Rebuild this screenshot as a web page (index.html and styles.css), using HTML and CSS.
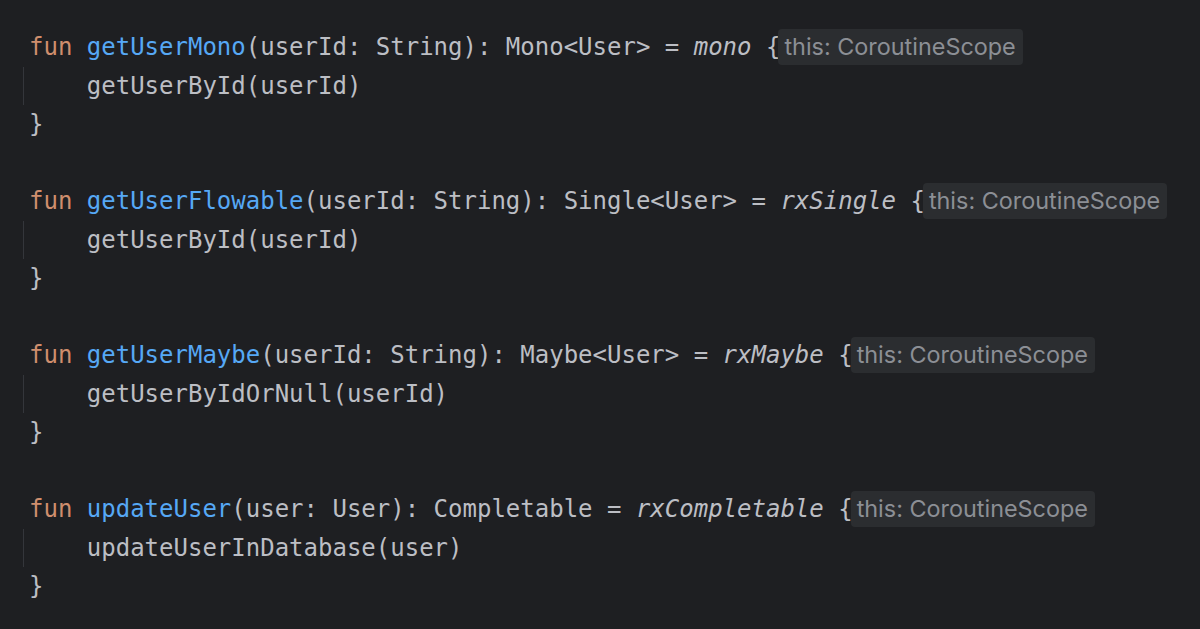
FILE: index.html
```html
<!DOCTYPE html>
<html>
<head>
<meta charset="utf-8">
<link rel="stylesheet" href="styles.css">
</head>
<body>
<div class="editor">
  <div class="line"><span class="kw">fun</span> <span class="fn">getUserMono</span>(userId: String): Mono&lt;User&gt; = <span class="call">mono</span> {<span class="hint">this: CoroutineScope</span></div>
  <div class="line body">    getUserById(userId)</div>
  <div class="line">}</div>
  <div class="line"> </div>
  <div class="line"><span class="kw">fun</span> <span class="fn">getUserFlowable</span>(userId: String): Single&lt;User&gt; = <span class="call">rxSingle</span> {<span class="hint">this: CoroutineScope</span></div>
  <div class="line body">    getUserById(userId)</div>
  <div class="line">}</div>
  <div class="line"> </div>
  <div class="line"><span class="kw">fun</span> <span class="fn">getUserMaybe</span>(userId: String): Maybe&lt;User&gt; = <span class="call">rxMaybe</span> {<span class="hint">this: CoroutineScope</span></div>
  <div class="line body">    getUserByIdOrNull(userId)</div>
  <div class="line">}</div>
  <div class="line"> </div>
  <div class="line"><span class="kw">fun</span> <span class="fn">updateUser</span>(user: User): Completable = <span class="call">rxCompletable</span> {<span class="hint">this: CoroutineScope</span></div>
  <div class="line body">    updateUserInDatabase(user)</div>
  <div class="line">}</div>
</div>
</body>
</html>
```

FILE: styles.css
```css
html, body {
  margin: 0;
  padding: 0;
  background: #1e1f22;
}
body {
  width: 1200px;
  height: 629px;
  overflow: hidden;
}
.editor {
  display: flex;
  flex-direction: column;
  padding: 28px 0 0 29px;
  font-family: "DejaVu Sans Mono", "Liberation Mono", monospace;
  font-size: 24px;
  color: #bcbec4;
}
.line {
  height: 38.5px;
  line-height: 38.5px;
  white-space: pre;
}
.body {
  margin-left: -29px;
  padding-left: 29px;
  background: linear-gradient(#34363b, #34363b) no-repeat 23px 0 / 1px 100%;
}
.kw { color: #cf8e6d; }
.fn { color: #56a8f5; }
.call { font-style: italic; }
.hint {
  display: inline-block;
  vertical-align: middle;
  margin-left: -2px;
  margin-top: -3px;
  padding: 0 7px 0 6px;
  height: 36px;
  line-height: 36px;
  background: #2b2d30;
  border-radius: 4px;
  font-family: Inter, "Noto Sans", sans-serif;
  font-size: 23.4px;
  color: #8c8f95;
}
```
